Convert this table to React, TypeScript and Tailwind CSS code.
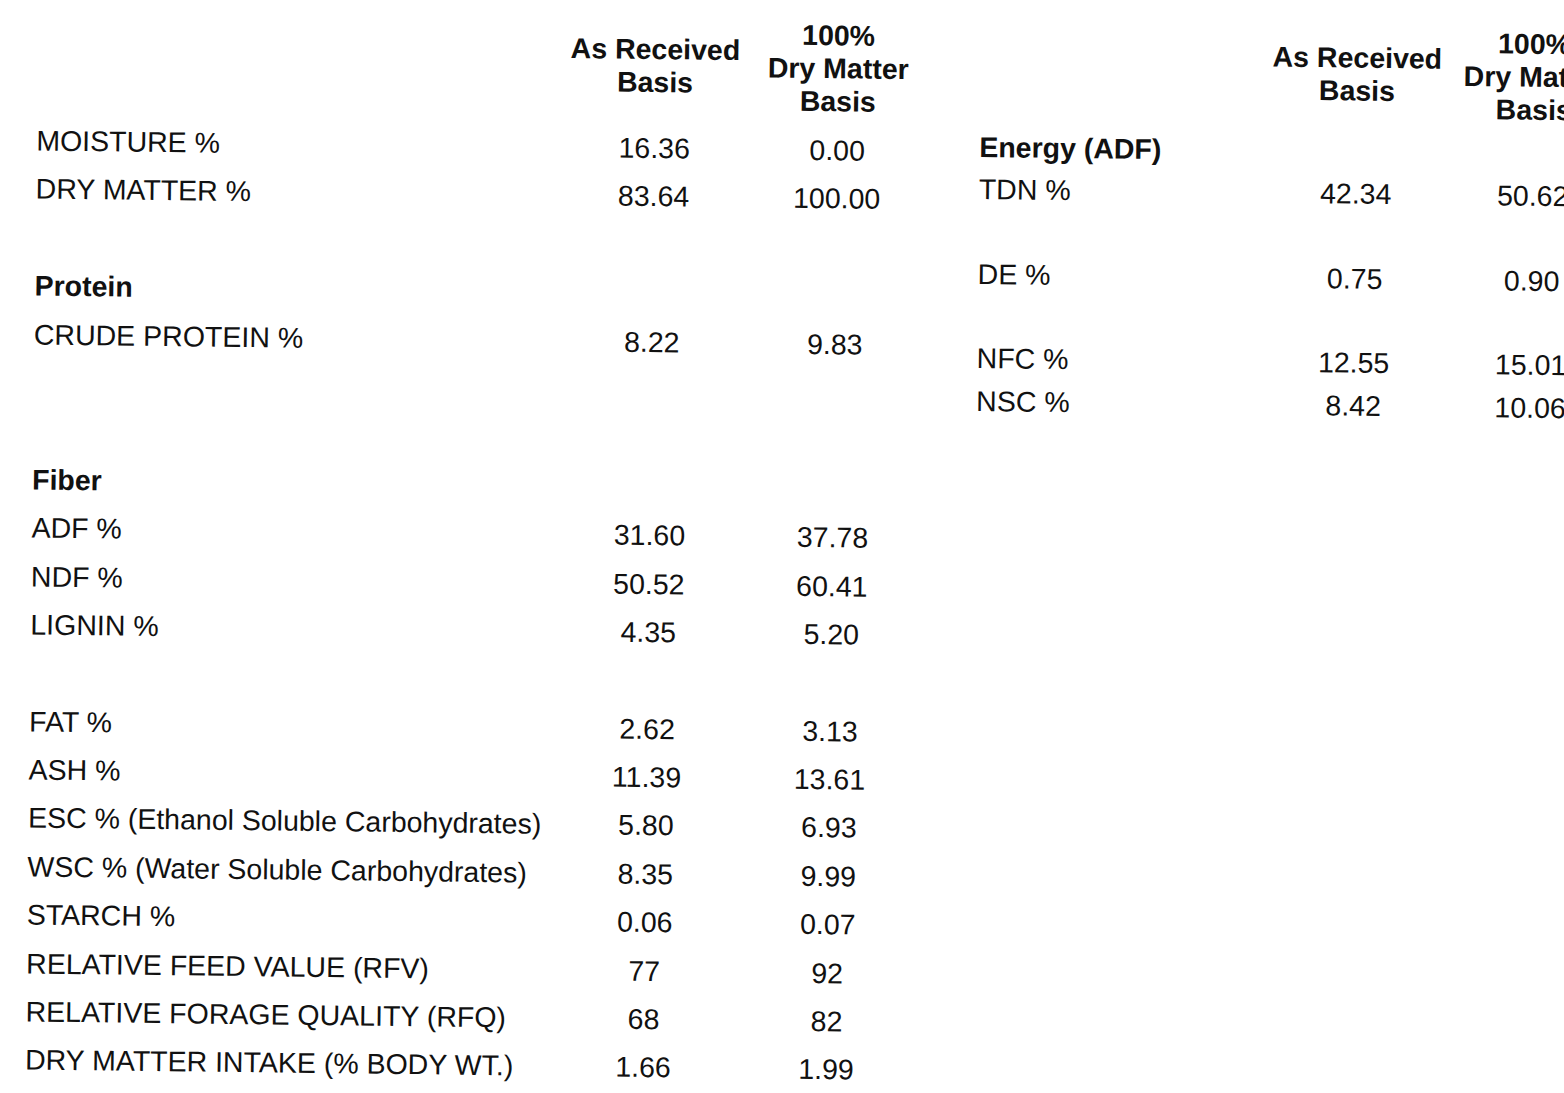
import React from "react";

type Row = { label: string; ar?: string; dm?: string; bold?: boolean } | null;

const leftRows: Row[] = [
  { label: "MOISTURE %", ar: "16.36", dm: "0.00" },
  { label: "DRY MATTER %", ar: "83.64", dm: "100.00" },
  null,
  { label: "Protein", bold: true },
  { label: "CRUDE PROTEIN %", ar: "8.22", dm: "9.83" },
  null,
  null,
  { label: "Fiber", bold: true },
  { label: "ADF %", ar: "31.60", dm: "37.78" },
  { label: "NDF %", ar: "50.52", dm: "60.41" },
  { label: "LIGNIN %", ar: "4.35", dm: "5.20" },
  null,
  { label: "FAT %", ar: "2.62", dm: "3.13" },
  { label: "ASH %", ar: "11.39", dm: "13.61" },
  { label: "ESC % (Ethanol Soluble Carbohydrates)", ar: "5.80", dm: "6.93" },
  { label: "WSC % (Water Soluble Carbohydrates)", ar: "8.35", dm: "9.99" },
  { label: "STARCH %", ar: "0.06", dm: "0.07" },
  { label: "RELATIVE FEED VALUE (RFV)", ar: "77", dm: "92" },
  { label: "RELATIVE FORAGE QUALITY (RFQ)", ar: "68", dm: "82" },
  { label: "DRY MATTER INTAKE (% BODY WT.)", ar: "1.66", dm: "1.99" },
];

const rightRows: Row[] = [
  { label: "Energy (ADF)", bold: true },
  { label: "TDN %", ar: "42.34", dm: "50.62" },
  null,
  { label: "DE %", ar: "0.75", dm: "0.90" },
  null,
  { label: "NFC %", ar: "12.55", dm: "15.01" },
  { label: "NSC %", ar: "8.42", dm: "10.06" },
];

function Header() {
  return (
    <>
      <div />
      <div className="flex h-[100px] flex-col items-center justify-center text-center font-bold leading-[33px]">
        <span>As Received</span>
        <span>Basis</span>
      </div>
      <div className="flex h-[100px] flex-col items-center justify-center text-center font-bold leading-[33px]">
        <span>100%</span>
        <span className="whitespace-nowrap">Dry Matter</span>
        <span>Basis</span>
      </div>
    </>
  );
}

function Rows({ rows, rowClass }: { rows: Row[]; rowClass: string }) {
  return (
    <>
      {rows.map((row, i) =>
        row ? (
          <React.Fragment key={i}>
            <div className={`${rowClass} whitespace-nowrap ${row.bold ? "font-bold" : ""}`}>
              {row.label}
            </div>
            <div className={`${rowClass} text-center`}>{row.ar}</div>
            <div className={`${rowClass} text-center`}>{row.dm}</div>
          </React.Fragment>
        ) : (
          <div key={i} className={`${rowClass} col-span-3`} />
        )
      )}
    </>
  );
}

export default function App() {
  return (
    <div className="h-[1093px] w-[1564px] overflow-hidden bg-white font-['Liberation_Sans',Arial,sans-serif] text-[28.5px] text-[#111]">
      <div className="flex origin-top-left rotate-[0.7deg] items-start gap-[49px] pl-[38px] pt-[8px]">
        {/* left table */}
        <div className="grid shrink-0 grid-cols-[528px_180px_186px] content-start">
          <Header />
          <div className="col-span-3 h-[8px]" />
          <Rows rows={leftRows} rowClass="h-[48.4px] leading-[48.4px]" />
        </div>

        {/* right table */}
        <div className="grid shrink-0 grid-cols-[290px_174px_180px] content-start">
          <Header />
          <div className="col-span-3 h-[6px]" />
          <Rows rows={rightRows} rowClass="h-[42.3px] leading-[42.3px]" />
        </div>
      </div>
    </div>
  );
}
